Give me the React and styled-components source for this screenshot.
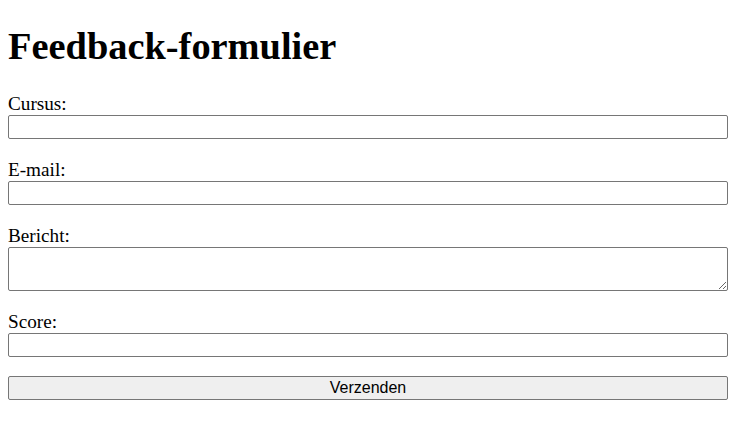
import React from 'react'
import styled, { createGlobalStyle } from 'styled-components'

const GlobalStyle = createGlobalStyle`
  body {
    margin: 0;
    background: #FFFFFF;
    color: #000000;
    font-family: "Liberation Serif", "Times New Roman", serif;
    font-size: 19.2px;
  }
`

const Page = styled.div`
  padding: 0 8px;
  display: flow-root;
`
const Title = styled.h1`
  font-size: 38.4px;
  font-weight: bold;
  margin: 24px 0;
  line-height: 44px;
`
const Form = styled.form`
  max-width: 720px;
  display: flex;
  flex-direction: column;
`
const Field = styled.div`
  margin-bottom: 19px;
`
const Label = styled.label`
  display: block;
  font-size: 19.2px;
  line-height: 23px;
`
const Input = styled.input`
  display: block;
  box-sizing: border-box;
  width: 100%;
  height: 24px;
  margin: 0;
  padding: 1px 2px;
  border: 1px solid #767676;
  border-radius: 2px;
  background: #FFFFFF;
  font-family: "Liberation Sans", Arial, sans-serif;
  font-size: 16px;
`
const TextArea = styled.textarea`
  display: block;
  box-sizing: border-box;
  width: 100%;
  height: 44px;
  margin: 0;
  padding: 2px;
  border: 1px solid #767676;
  border-radius: 2px;
  font-family: "Liberation Mono", monospace;
  font-size: 16px;
`
const SubmitButton = styled.button`
  box-sizing: border-box;
  width: 100%;
  height: 24px;
  margin: 0;
  padding: 0;
  border: 1px solid #767676;
  border-radius: 2px;
  background: #EFEFEF;
  color: #000000;
  font-family: "Liberation Sans", Arial, sans-serif;
  font-size: 16px;
  line-height: 20px;
`

const fields = [
  { id: 'cursus', label: 'Cursus:', type: 'text' },
  { id: 'email', label: 'E-mail:', type: 'email' },
  { id: 'bericht', label: 'Bericht:', multiline: true },
  { id: 'score', label: 'Score:', type: 'number' },
]

const App = () => (
  <Page>
    <GlobalStyle />
    <Title>Feedback-formulier</Title>
    <Form onSubmit={(e) => e.preventDefault()}>
      {fields.map((field) => (
        <Field key={field.id}>
          <Label htmlFor={field.id}>{field.label}</Label>
          {field.multiline
            ? <TextArea id={field.id} />
            : <Input id={field.id} type={field.type} />}
        </Field>
      ))}
      <SubmitButton type="submit">Verzenden</SubmitButton>
    </Form>
  </Page>
)

export default App
